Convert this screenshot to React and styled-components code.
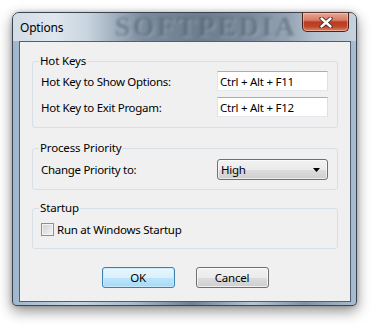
import React from 'react';
import styled, { createGlobalStyle } from 'styled-components';

const Global = createGlobalStyle`
  html, body { margin: 0; padding: 0; background: #ffffff; }
  body {
    width: 377px; height: 328px; overflow: hidden;
    font-family: "Noto Sans", "Open Sans", sans-serif;
    font-size: 11px; color: #000;
  }
`;

const Stage = styled.div`
  padding: 12px 0 0 12px;
`;

const Window = styled.div`
  position: relative;
  box-sizing: border-box;
  width: 345px;
  height: 294px;
  border: 1px solid #3a4550;
  border-radius: 7px 7px 4px 4px;
  padding: 0 5px 3px 6px;
  display: flex;
  flex-direction: column;
  background: linear-gradient(90deg, #9fb6cc 0%, #c3d4e4 18%, #a7bbcf 35%, #6d8096 52%, #b4c6d7 70%, #7f93a8 85%, #a9bdd0 100%);
  box-shadow: 0 5px 14px rgba(0, 0, 0, 0.45), 0 0 4px rgba(0, 0, 0, 0.2);
`;

const TitleBar = styled.div`
  position: relative;
  height: 28px;
  margin: 0 -5px 0 -6px;
  padding: 0 6px 0 7px;
  display: flex;
  align-items: flex-start;
  border-radius: 6px 6px 0 0;
  background: linear-gradient(90deg, #d3dde6 0%, #dfe7ee 12%, #c7d3de 22%, #a3b2c1 29%, #7a8b9d 38%, #6c7d8f 55%, #7b8c9e 70%, #93a3b3 80%, #b3c1ce 88%, #c6d2dd 100%);
`;

const Title = styled.span`
  position: relative;
  z-index: 1;
  margin-top: 7px;
  font-size: 12px;
  line-height: 16px;
  letter-spacing: -0.2px;
  color: #000;
`;

const Watermark = styled.span`
  position: absolute;
  left: 102px;
  top: 0;
  font-family: "Liberation Serif", serif;
  font-weight: bold;
  font-size: 28px;
  line-height: 28px;
  letter-spacing: 2.5px;
  color: rgba(44, 58, 76, 0.5);
  text-shadow: 1px 1px 1px rgba(230, 236, 242, 0.45);
  filter: blur(1.4px);
  pointer-events: none;
`;

const CloseButton = styled.div`
  position: relative;
  z-index: 1;
  margin: -1px 1px 0 auto;
  box-sizing: border-box;
  width: 47px;
  height: 20px;
  border: 1px solid #4d2218;
  border-top-color: #5a3a32;
  border-radius: 0 0 5px 5px;
  display: flex;
  align-items: center;
  justify-content: center;
  background: linear-gradient(180deg, #e6a796 0%, #d77c64 40%, #b93c1f 50%, #c0452a 75%, #d8876a 100%);
  box-shadow: inset 0 0 0 1px rgba(255, 220, 210, 0.45);
`;

const Client = styled.div`
  flex: 1;
  box-sizing: border-box;
  border: 1px solid #4f5f70;
  background: #f0f0f0;
  padding: 12px 12px 0 12px;
  display: flex;
  flex-direction: column;
`;

const Group = styled.fieldset`
  margin: ${p => p.$top}px 0 0 0;
  padding: ${p => p.$pad};
  border: 1px solid #d5dfe5;
  border-radius: 3px;
  min-width: 0;
`;

const Legend = styled.legend`
  margin-left: -2px;
  padding: 0 1px;
  font-size: 11.5px;
  line-height: 14px;
  letter-spacing: -0.15px;
`;

const Rows = styled.div`
  display: flex;
  flex-direction: column;
  gap: 6px;
`;

const Row = styled.div`
  display: flex;
  align-items: center;
  justify-content: space-between;
  height: ${p => p.$h || 20}px;
`;

const Label = styled.span`
  font-size: 11.5px;
  line-height: 15px;
  letter-spacing: -0.3px;
`;

const TextBox = styled.div`
  box-sizing: border-box;
  width: 111px;
  height: 20px;
  padding: 0 0 0 2px;
  background: #fff;
  border: 1px solid;
  border-color: #abadb3 #dbdfe6 #e3e9ef #e2e3ea;
  display: flex;
  align-items: center;
  font-size: 11.5px;
  letter-spacing: -0.25px;
`;

const Combo = styled.div`
  box-sizing: border-box;
  width: 111px;
  height: 21px;
  padding: 0 7px 0 3px;
  border: 1px solid #707070;
  border-radius: 3px;
  display: flex;
  align-items: center;
  justify-content: space-between;
  background: linear-gradient(180deg, #f2f2f2 0%, #ebebeb 50%, #dddddd 50%, #cfcfcf 100%);
  box-shadow: inset 0 0 0 1px rgba(255, 255, 255, 0.6);
  font-size: 11.5px;
  letter-spacing: -0.25px;
`;

const CheckRow = styled.label`
  display: flex;
  align-items: center;
  gap: 3px;
  height: 15px;
  font-size: 11.5px;
  letter-spacing: -0.25px;
`;

const CheckBox = styled.span`
  box-sizing: border-box;
  width: 13px;
  height: 13px;
  border: 1px solid #8e8f8f;
  background: linear-gradient(135deg, #cbcfd5 0%, #f6f6f6 100%);
  box-shadow: inset 0 0 0 1px #f4f4f4;
`;

const Buttons = styled.div`
  margin-top: 18px;
  display: flex;
  justify-content: center;
  gap: 21px;
`;

const Button = styled.div`
  box-sizing: border-box;
  width: 73px;
  height: 21px;
  border: 1px solid ${p => (p.$default ? '#3c7fb1' : '#707070')};
  border-radius: 3px;
  display: flex;
  align-items: center;
  justify-content: center;
  font-size: 11.5px;
  letter-spacing: -0.2px;
  background: ${p =>
    p.$default
      ? 'linear-gradient(180deg, #eaf6fd 0%, #d9f0fc 50%, #bee6fd 50%, #a7d9f5 100%)'
      : 'linear-gradient(180deg, #f2f2f2 0%, #ebebeb 50%, #dddddd 50%, #cfcfcf 100%)'};
  box-shadow: inset 0 0 0 1px ${p => (p.$default ? 'rgba(200, 235, 255, 0.9)' : 'rgba(255, 255, 255, 0.7)')};
`;

const CloseIcon = () => (
  <svg width="14" height="11" viewBox="0 0 14 11">
    <path d="M2.5 1.5 L11.5 9.5 M11.5 1.5 L2.5 9.5" stroke="#3a2a28" strokeWidth="4.2" strokeLinecap="round" />
    <path d="M2.5 1.5 L11.5 9.5 M11.5 1.5 L2.5 9.5" stroke="#ffffff" strokeWidth="2.4" strokeLinecap="round" />
  </svg>
);

const Arrow = () => (
  <svg width="7" height="4" viewBox="0 0 7 4">
    <path d="M0 0 H7 L3.5 4 Z" fill="#000" />
  </svg>
);

export default function App() {
  return (
    <>
      <Global />
      <Stage>
        <Window>
          <TitleBar>
            <Watermark>SOFTPEDIA</Watermark>
            <Title>Options</Title>
            <CloseButton>
              <CloseIcon />
            </CloseButton>
          </TitleBar>
          <Client>
            <Group $top={0} $pad="3px 9px 10px 8px">
              <Legend>Hot Keys</Legend>
              <Rows>
                <Row>
                  <Label>Hot Key to Show Options:</Label>
                  <TextBox>Ctrl + Alt + F11</TextBox>
                </Row>
                <Row>
                  <Label>Hot Key to Exit Progam:</Label>
                  <TextBox>Ctrl + Alt + F12</TextBox>
                </Row>
              </Rows>
            </Group>
            <Group $top={13} $pad="4px 9px 9px 8px">
              <Legend>Process Priority</Legend>
              <Row $h={21}>
                <Label>Change Priority to:</Label>
                <Combo>
                  <span>High</span>
                  <Arrow />
                </Combo>
              </Row>
            </Group>
            <Group $top={11} $pad="7px 9px 11px 8px">
              <Legend>Startup</Legend>
              <CheckRow>
                <CheckBox />
                <span>Run at Windows Startup</span>
              </CheckRow>
            </Group>
            <Buttons>
              <Button $default>OK</Button>
              <Button>Cancel</Button>
            </Buttons>
          </Client>
        </Window>
      </Stage>
    </>
  );
}
